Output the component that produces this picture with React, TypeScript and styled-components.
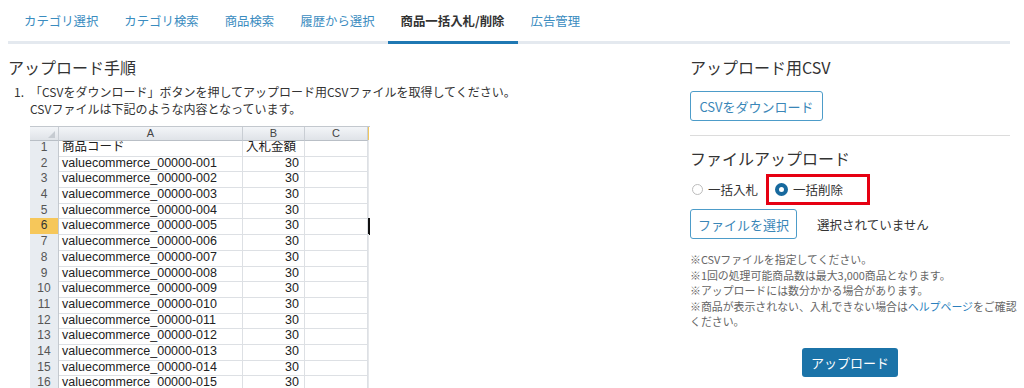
import React from "react";
import styled, { createGlobalStyle, css } from "styled-components";

const GlobalStyle = createGlobalStyle`
  body {
    margin: 0;
    background: #fff;
    font-family: "Noto Sans CJK JP", "Noto Sans", sans-serif;
    color: #333;
  }
`;

const Page = styled.div`
  width: 1024px;
`;

const TabBar = styled.nav`
  display: flex;
  margin: 0 14px 0 8px;
  padding-left: 3px;
  border-bottom: 3px solid #e4e9ef;
`;

const Tab = styled.div<{ $active?: boolean }>`
  height: 41px;
  line-height: 43px;
  padding: 0 13px;
  font-size: 12.4px;
  color: #3a8cbf;
  margin-bottom: -3px;
  border-bottom: 3px solid transparent;
  ${(p) =>
    p.$active &&
    css`
      color: #333;
      font-weight: bold;
      border-bottom-color: #1f78b3;
    `}
`;

const Main = styled.div`
  display: flex;
  padding: 12px 14px 0 8px;
`;

const LeftCol = styled.section`
  flex: 1;
`;

const RightCol = styled.section`
  width: 320px;
  flex: none;
`;

const Heading = styled.h2`
  margin: 0;
  font-size: 16px;
  font-weight: normal;
  line-height: 22px;
  color: #333;
`;

const Step = styled.div`
  display: flex;
  margin-top: 5px;
  padding-left: 6px;
  font-size: 12px;
  line-height: 17px;
  color: #333;
`;

const StepNum = styled.span`
  width: 16px;
  flex: none;
`;

const StepBody = styled.div``;

const Sheet = styled.div`
  margin-top: 9px;
  width: 340px;
  border-top: 1px solid #c3c8ce;
  font-family: "Liberation Sans", "Noto Sans CJK JP", sans-serif;
  font-size: 12.5px;
  color: #222;
`;

const SheetRow = styled.div<{ $head?: boolean }>`
  display: grid;
  grid-template-columns: 29px 184px 62px 63px 2px;
  height: ${(p) => (p.$head ? "13px" : "15.7px")};
  line-height: ${(p) => (p.$head ? "13px" : "15.7px")};
`;

const Cell = styled.div<{ $right?: boolean }>`
  border-right: 1px solid #dde0e4;
  border-bottom: 1px solid #dde0e4;
  padding: 0 3px;
  text-align: ${(p) => (p.$right ? "right" : "left")};
  padding-right: ${(p) => (p.$right ? "5px" : "3px")};
  white-space: nowrap;
  overflow: hidden;
  box-sizing: border-box;
`;

const ColHead = styled.div<{ $corner?: boolean }>`
  position: relative;
  background: linear-gradient(#f3f5f8, #dfe3e8);
  border-right: 1px solid #c9ced4;
  border-bottom: 1px solid #b9bfc6;
  text-align: center;
  color: #444;
  font-size: 11px;
  box-sizing: border-box;
  ${(p) =>
    p.$corner &&
    css`
      &::after {
        content: "";
        position: absolute;
        right: 3px;
        bottom: 2px;
        border-left: 7px solid transparent;
        border-bottom: 7px solid #c6cbd1;
      }
    `}
`;

const RowHead = styled.div<{ $sel?: boolean }>`
  background: ${(p) => (p.$sel ? "#f6c75a" : "#e8ecf1")};
  color: ${(p) => (p.$sel ? "#333" : "#555")};
  border-right: 1px solid #c4c9cf;
  border-bottom: 1px solid ${(p) => (p.$sel ? "#e0a83a" : "#d4d9df")};
  text-align: center;
  font-size: 12px;
  box-sizing: border-box;
`;

const Edge = styled.div<{ $head?: boolean; $cursor?: boolean }>`
  background: ${(p) => (p.$cursor ? "#111" : p.$head ? "#f0c75e" : "#e6e8eb")};
  width: ${(p) => (p.$cursor ? "2px" : "1px")};
`;

const OutlineButton = styled.button<{ $w: number }>`
  width: ${(p) => p.$w}px;
  height: 30px;
  padding: 0;
  border: 1px solid #4d9cc9;
  border-radius: 3px;
  background: #fff;
  color: #3a86b7;
  font-family: inherit;
  font-size: 13px;
  cursor: pointer;
`;

const DownloadButton = styled(OutlineButton)`
  margin-top: 13px;
`;

const Divider = styled.hr`
  margin: 14px 0 11px;
  border: 0;
  border-top: 1px solid #dcdcdc;
`;

const RadioRow = styled.div`
  display: flex;
  align-items: center;
  margin-top: 5px;
  height: 31px;
`;

const RadioLabel = styled.label<{ $marked?: boolean }>`
  display: flex;
  align-items: center;
  gap: 5px;
  font-size: 12.5px;
  color: #333;
  height: 31px;
  box-sizing: border-box;
  ${(p) =>
    p.$marked
      ? css`
          margin-left: 8px;
          width: 104px;
          padding-left: 6px;
          border: 3px solid #e60012;
        `
      : css`
          padding-left: 2px;
        `}
`;

const RadioDot = styled.span<{ $on?: boolean }>`
  display: inline-block;
  box-sizing: border-box;
  border-radius: 50%;
  ${(p) =>
    p.$on
      ? css`
          width: 13px;
          height: 13px;
          border: 4px solid #17699e;
          background: #fff;
        `
      : css`
          width: 11px;
          height: 11px;
          border: 1px solid #bcbcbc;
          background: #fff;
        `}
`;

const FileRow = styled.div`
  display: flex;
  align-items: center;
  gap: 20px;
  margin-top: 4px;
  font-size: 12.5px;
  color: #333;
`;

const Notes = styled.div`
  margin-top: 13px;
  font-size: 10.9px;
  line-height: 15.5px;
  color: #666;
`;

const NoteLine = styled.div`
  white-space: nowrap;
`;

const HelpLink = styled.a`
  color: #2c7fbd;
  text-decoration: none;
`;

const UploadWrap = styled.div`
  display: flex;
  justify-content: center;
  margin-top: 18px;
`;

const UploadButton = styled.button`
  width: 96px;
  height: 29px;
  border: 0;
  border-radius: 3px;
  background: #1b73a8;
  color: #fff;
  font-family: inherit;
  font-size: 13px;
`;

const tabs = [
  "カテゴリ選択",
  "カテゴリ検索",
  "商品検索",
  "履歴から選択",
  "商品一括入札/削除",
  "広告管理",
];

const rows = Array.from({ length: 16 }, (_, i) => i + 1);

function App() {
  return (
    <Page>
      <GlobalStyle />
      <TabBar>
        {tabs.map((t, i) => (
          <Tab key={t} $active={i === 4}>
            {t}
          </Tab>
        ))}
      </TabBar>
      <Main>
        <LeftCol>
          <Heading>アップロード手順</Heading>
          <Step>
            <StepNum>1.</StepNum>
            <StepBody>
              「CSVをダウンロード」ボタンを押してアップロード用CSVファイルを取得してください。
              <br />
              CSVファイルは下記のような内容となっています。
              <Sheet>
                <SheetRow $head>
                  <ColHead $corner />
                  <ColHead>A</ColHead>
                  <ColHead>B</ColHead>
                  <ColHead>C</ColHead>
                  <Edge $head />
                </SheetRow>
                {rows.map((r) => (
                  <SheetRow key={r}>
                    <RowHead $sel={r === 6}>{r}</RowHead>
                    <Cell>
                      {r === 1
                        ? "商品コード"
                        : `valuecommerce_00000-${String(r - 1).padStart(3, "0")}`}
                    </Cell>
                    <Cell $right={r !== 1}>{r === 1 ? "入札金額" : "30"}</Cell>
                    <Cell />
                    <Edge $cursor={r === 6} />
                  </SheetRow>
                ))}
              </Sheet>
            </StepBody>
          </Step>
        </LeftCol>
        <RightCol>
          <Heading>アップロード用CSV</Heading>
          <DownloadButton $w={133}>CSVをダウンロード</DownloadButton>
          <Divider />
          <Heading>ファイルアップロード</Heading>
          <RadioRow>
            <RadioLabel>
              <RadioDot />
              一括入札
            </RadioLabel>
            <RadioLabel $marked>
              <RadioDot $on />
              一括削除
            </RadioLabel>
          </RadioRow>
          <FileRow>
            <OutlineButton $w={107}>ファイルを選択</OutlineButton>
            <span>選択されていません</span>
          </FileRow>
          <Notes>
            <NoteLine>※CSVファイルを指定してください。</NoteLine>
            <NoteLine>※1回の処理可能商品数は最大3,000商品となります。</NoteLine>
            <NoteLine>※アップロードには数分かかる場合があります。</NoteLine>
            <NoteLine>
              ※商品が表示されない、入札できない場合は
              <HelpLink href="#">ヘルプページ</HelpLink>
              をご確認
            </NoteLine>
            <NoteLine>ください。</NoteLine>
          </Notes>
          <UploadWrap>
            <UploadButton>アップロード</UploadButton>
          </UploadWrap>
        </RightCol>
      </Main>
    </Page>
  );
}

export default App;
